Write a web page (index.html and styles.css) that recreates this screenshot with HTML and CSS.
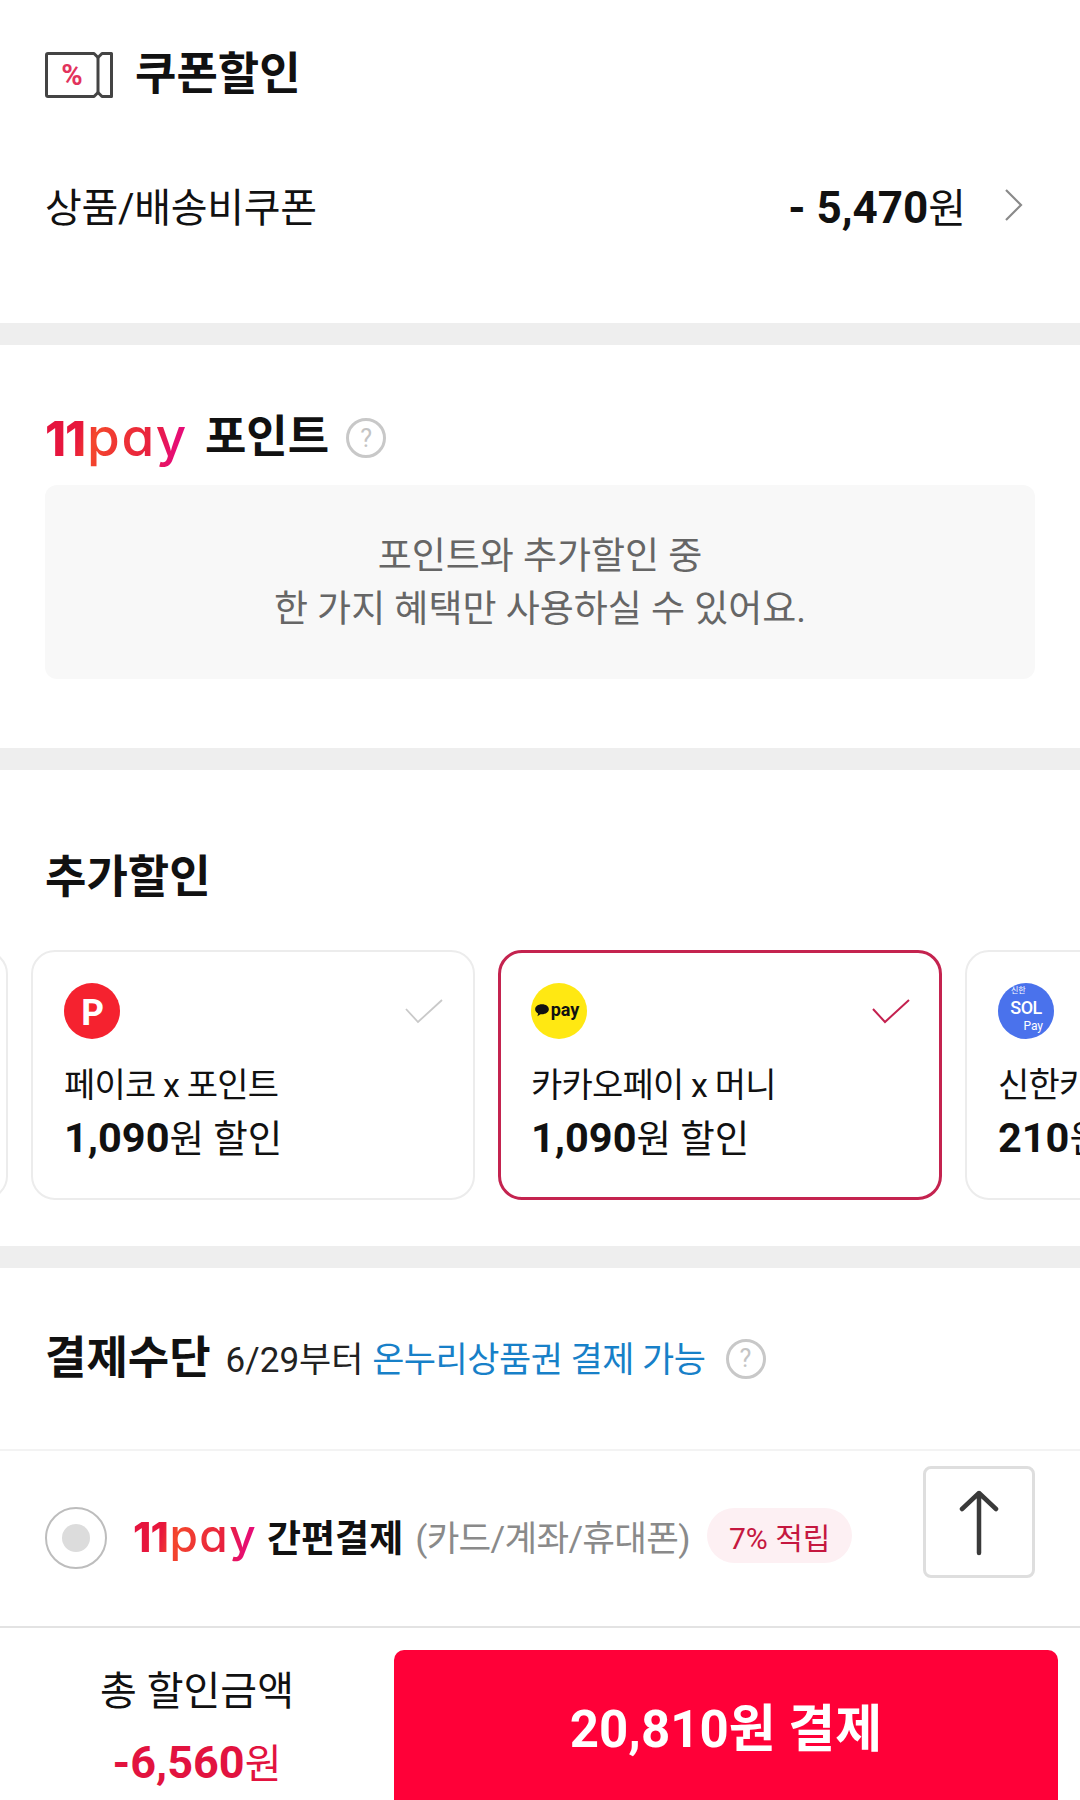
FILE: index.html
```html
<!DOCTYPE html>
<html lang="ko">
<head>
<meta charset="utf-8">
<title>결제</title>
<link rel="stylesheet" href="styles.css">
</head>
<body>
<main class="page">
  <section class="section coupon">
    <h2 class="title-row">
      <svg class="coupon-icon" viewBox="0 0 68 46" width="68" height="46" aria-hidden="true">
        <path d="M3 1.5H49L53 5.5L57 1.5H66.5V44.5H57L53 40.5L49 44.5H3Q1.5 44.5 1.5 43V3Q1.5 1.5 3 1.5Z" fill="#fff" stroke="#444" stroke-width="3" stroke-linejoin="round"/>
        <path d="M53 5.5V40.5" stroke="#444" stroke-width="3"/>
        <text x="27" y="33" class="coupon-pct">%</text>
      </svg>
      <span>쿠폰할인</span>
    </h2>
    <div class="coupon-row">
      <span class="coupon-label">상품/배송비쿠폰</span>
      <span class="coupon-value"><b>- 5,470</b>원</span>
      <svg class="chevron" viewBox="0 0 20 34" width="20" height="34" aria-hidden="true"><path d="M2 2L17 17L2 32" fill="none" stroke="#8a8a8a" stroke-width="2.2"/></svg>
    </div>
  </section>

  <section class="section points">
    <h2 class="title-row points-title">
      <span class="logo11"><b>11</b><span>pay</span></span>
      <span>포인트</span>
      <span class="help">?</span>
    </h2>
    <div class="notice">포인트와 추가할인 중<br>한 가지 혜택만 사용하실 수 있어요.</div>
  </section>

  <section class="section extra">
    <h2 class="extra-title">추가할인</h2>
    <div class="carousel">
      <div class="track">
        <article class="card"></article>
        <article class="card">
          <div class="card-top">
            <span class="badge badge-payco">P</span>
            <svg class="check" viewBox="0 0 38 26" width="38" height="26" aria-hidden="true"><path d="M1 11L13 24L37 2" fill="none" stroke="#c9c9c9" stroke-width="1.8"/></svg>
          </div>
          <p class="card-name">페이코 x 포인트</p>
          <p class="card-amount"><b>1,090</b>원 할인</p>
        </article>
        <article class="card card-on">
          <div class="card-top">
            <span class="badge badge-kakao"><svg viewBox="0 0 14 12" width="16" height="14" aria-hidden="true"><path d="M7 1C3.4 1 1 3 1 5.4C1 7.2 2.2 8.4 3.6 9L3 11.4L5.7 9.7C9.8 10.1 13 8.2 13 5.4C13 3 10.6 1 7 1Z" fill="#111"/></svg>pay</span>
            <svg class="check" viewBox="0 0 38 26" width="38" height="26" aria-hidden="true"><path d="M1 11L13 24L37 2" fill="none" stroke="#c4214f" stroke-width="2"/></svg>
          </div>
          <p class="card-name">카카오페이 x 머니</p>
          <p class="card-amount"><b>1,090</b>원 할인</p>
        </article>
        <article class="card">
          <div class="card-top">
            <span class="badge badge-sol"><small>신한</small><strong>SOL</strong><em>Pay</em></span>
          </div>
          <p class="card-name">신한카드 x 포인트</p>
          <p class="card-amount"><b>210</b>원 할인</p>
        </article>
      </div>
    </div>
  </section>

  <section class="payment">
    <div class="pay-head">
      <h2 class="pay-title">결제수단</h2>
      <span class="pay-note">6/29부터 <span class="link">온누리상품권 결제 가능</span></span>
      <span class="help help-pay">?</span>
    </div>
    <div class="pay-row">
      <span class="radio"><i></i></span>
      <span class="logo11 logo-small"><b>11</b><span>pay</span></span>
      <strong class="pay-name">간편결제</strong>
      <span class="pay-sub">(카드/계좌/휴대폰)</span>
      <span class="pill">7% 적립</span>
    </div>
  </section>

  <footer class="footer">
    <div class="total">
      <span class="total-label">총 할인금액</span>
      <span class="total-value"><b>-6,560</b>원</span>
    </div>
    <button class="pay-btn" type="button">20,810원 결제</button>
  </footer>

  <button class="to-top" type="button" aria-label="맨 위로">
    <svg viewBox="0 0 42 68" width="42" height="68" aria-hidden="true"><path d="M21 65V5M4 21L21 5L38 21" fill="none" stroke="#3a3a3a" stroke-width="4.5" stroke-linecap="round" stroke-linejoin="round"/></svg>
  </button>
</main>
</body>
</html>
```
FILE: styles.css
```css
* { box-sizing: border-box; }
html, body { margin: 0; padding: 0; }
body {
  background: #fff;
  color: #111;
  font-family: Roboto, "Noto Sans CJK KR", "Noto Sans", sans-serif;
}
h2, p { margin: 0; }
.page {
  position: relative;
  width: 1080px;
  height: 1800px;
  overflow: hidden;
  display: flex;
  flex-direction: column;
}
.section { flex: none; padding: 0 45px; border-bottom: 22px solid #eeeeee; }

.title-row { display: flex; align-items: center; font-size: 45px; font-weight: 700; line-height: 60px; }
.coupon { height: 345px; padding-top: 45px; }
.coupon .title-row { gap: 22px; }
.coupon-pct { font: 700 29px Roboto, sans-serif; fill: #e2335c; text-anchor: middle; }
.coupon-row { display: flex; align-items: center; margin-top: 70px; height: 60px; font-size: 40px; }
.coupon-label { flex: 1; letter-spacing: -.3px; }
.coupon-value { font-size: 41px; }
.coupon-value b { font-size: 44px; font-weight: 700; }
.chevron { margin: 0 11px 0 38px; }

.points { height: 425px; padding-top: 58px; }
.points-title { gap: 17px; height: 70px; }
.logo11 {
  display: inline-flex;
  align-items: baseline;
  font-family: Inter, sans-serif;
  font-size: 53px;
  line-height: 70px;
  background: linear-gradient(105deg, #e4133f 0%, #e8173c 26%, #f4472c 36%, #e8203f 72%, #e5009a 100%);
  -webkit-background-clip: text;
  background-clip: text;
  color: transparent;
}
.logo11 b { font-size: .9em; font-weight: 800; letter-spacing: -.02em; margin-right: .04em; }
.logo11 span { font-weight: 500; font-feature-settings: "cv11" 1; letter-spacing: .03em; }
.help {
  display: inline-flex; align-items: center; justify-content: center;
  width: 40px; height: 40px;
  border: 3px solid #c8c8c8; border-radius: 50%;
  color: #c4c4c4; font-size: 25px; font-weight: 400; line-height: 1;
}
.notice {
  margin-top: 12px;
  height: 194px;
  padding-top: 2px;
  display: flex; align-items: center; justify-content: center; text-align: center;
  background: #f8f8f8; border-radius: 12px;
  color: #666; font-size: 37px; line-height: 53px;
}

.extra { height: 498px; padding: 78px 0 0; }
.extra-title { padding-left: 45px; font-size: 45px; font-weight: 700; line-height: 60px; }
.carousel { margin-top: 42px; overflow: hidden; }
.track { display: flex; gap: 23px; margin-left: -436px; }
.card {
  flex: 0 0 444px;
  height: 250px;
  padding: 31px 30px 0 31px;
  border: 2px solid #ececec;
  border-radius: 24px;
  background: #fff;
}
.card-on { border: 3px solid #c4234f; padding: 30px 29px 0 30px; }
.card-top { display: flex; justify-content: space-between; height: 56px; }
.check { margin: 15px 0 0; }
.badge {
  display: flex; align-items: center; justify-content: center;
  width: 56px; height: 56px; border-radius: 50%;
}
.badge-payco { background: #f5222f; color: #fff; font: 900 36px Lato, sans-serif; }
.badge-kakao { padding: 0 5px 3px 0; background: #ffe812; color: #111; font: 700 18px Roboto, sans-serif; gap: 1px; }
.badge-sol {
  flex-direction: column;
  padding-bottom: 3px;
  background: #4a72ec; color: #fff;
  font-family: Roboto, "Noto Sans CJK KR", sans-serif;
}
.badge-sol small { align-self: flex-start; margin-left: 13px; font-size: 8px; line-height: 12px; }
.badge-sol strong { font-size: 18px; line-height: 22px; font-weight: 500; letter-spacing: -.5px; }
.badge-sol em { align-self: flex-end; margin-right: 11px; font-size: 12px; line-height: 15px; font-style: normal; }
.card-name { margin-top: 23px; font-size: 34px; line-height: 46px; letter-spacing: -.8px; white-space: nowrap; }
.card-amount { margin-top: 4px; font-size: 37.5px; line-height: 52px; white-space: nowrap; }
.card-amount b { font-size: 41.5px; font-weight: 700; }

.payment { flex: none; height: 358px; }
.pay-head { display: flex; align-items: center; height: 183px; padding: 0 45px; border-bottom: 2px solid #f3f3f3; }
.pay-title { font-size: 45px; font-weight: 700; line-height: 60px; margin-right: 15px; }
.pay-note { padding-bottom: 4px; font-size: 35px; color: #222; }
.link { color: #1780c8; letter-spacing: -.5px; }
.help-pay { margin-left: 20px; }
.pay-row { display: flex; align-items: center; height: 173px; padding-left: 45px; padding-bottom: 4px; }
.radio {
  display: flex; align-items: center; justify-content: center;
  width: 62px; height: 62px; margin-top: 4px; border: 2px solid #bdbdbd; border-radius: 50%;
}
.radio i { width: 28px; height: 28px; border-radius: 50%; background: #dcdcdc; }
.logo-small { margin-left: 26px; font-size: 46px; }
.pay-name { margin-left: 10px; font-size: 37px; font-weight: 700; }
.pay-sub { margin-left: 12px; font-size: 35.5px; color: #8a8a8a; letter-spacing: -.7px; }
.pill {
  margin-left: 17px; padding: 0 22px; height: 55px;
  display: inline-flex; align-items: center;
  background: #fdf0f3; border-radius: 28px;
  color: #c5173f; font-size: 30px;
}

.footer {
  flex: 1 1 0;
  min-height: 0;
  display: flex;
  padding: 22px 22px 0 0;
  border-top: 2px solid #e3e3e3;
}
.total { width: 394px; display: flex; flex-direction: column; align-items: center; }
.total-label { font-size: 40px; line-height: 56px; margin-top: 14px; }
.total-value { margin-top: 15px; color: #e2133f; font-size: 40px; line-height: 56px; }
.total-value b { font-size: 45px; font-weight: 700; }
.pay-btn {
  flex: 1; height: 170px; padding: 0 0 20px;
  border: 0; border-radius: 10px;
  background: #ff0038; color: #fff;
  font-family: inherit; font-size: 51px; font-weight: 700;
}

.to-top {
  position: absolute; left: 923px; top: 1466px;
  width: 112px; height: 112px;
  display: flex; align-items: center; justify-content: center;
  background: #fff; border: 3px solid #dedede; border-radius: 8px;
  padding: 0;
}
```
